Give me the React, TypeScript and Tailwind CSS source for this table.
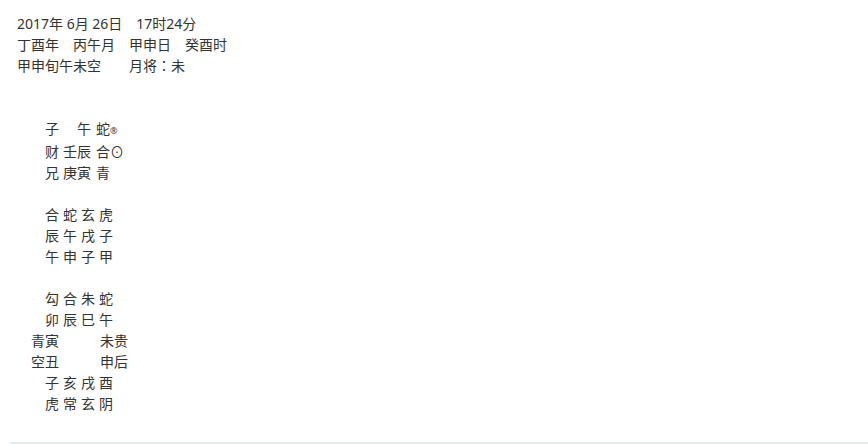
const font = { fontFamily: '"Noto Sans", "Noto Sans CJK SC", sans-serif' };

function Cell({ children, wide }: { children: React.ReactNode; wide?: boolean }) {
  return (
    <span className={`inline-block ${wide ? 'w-[28px]' : 'w-[14px]'} text-right whitespace-nowrap`}>
      {children}
    </span>
  );
}

function Row({ cells }: { cells: string[] }) {
  return (
    <div className="flex gap-[4px] pl-[28px]">
      {cells.map((c, i) => (
        <Cell key={i}>{c}</Cell>
      ))}
    </div>
  );
}

const Blank = () => <div className="h-[21px]" />;

export default function App() {
  return (
    <div className="bg-white min-h-[444px] w-full text-[#333] text-[14px] leading-[21px]" style={font}>
      <div className="pl-[17px] pt-[13px]">
        <div>2017年 6月 26日　17时24分</div>
        <div>丁酉年　丙午月　甲申日　癸酉时</div>
        <div>
          甲申旬午未空　　月将
          <span className="font-['Noto_Sans_CJK_TC',sans-serif]">：</span>未
        </div>
        <Blank />
        <Blank />

        {/* 三传 */}
        <div className="flex gap-[4px] pl-[28px]">
          <Cell>子</Cell>
          <Cell wide>午</Cell>
          <span className="ml-[1px] whitespace-nowrap">
            蛇<span className="text-[9px] align-middle">®</span>
          </span>
        </div>
        <div className="flex gap-[4px] pl-[28px]">
          <Cell>财</Cell>
          <Cell wide>壬辰</Cell>
          <span className="ml-[1px]">合⊙</span>
        </div>
        <div className="flex gap-[4px] pl-[28px]">
          <Cell>兄</Cell>
          <Cell wide>庚寅</Cell>
          <span className="ml-[1px]">青</span>
        </div>
        <Blank />

        {/* 四课 */}
        <Row cells={['合', '蛇', '玄', '虎']} />
        <Row cells={['辰', '午', '戌', '子']} />
        <Row cells={['午', '申', '子', '甲']} />
        <Blank />

        {/* 天地盘 */}
        <Row cells={['勾', '合', '朱', '蛇']} />
        <Row cells={['卯', '辰', '巳', '午']} />
        <div className="flex pl-[14px]">
          <span className="w-[69px]">青寅</span>
          <span>未贵</span>
        </div>
        <div className="flex pl-[14px]">
          <span className="w-[69px]">空丑</span>
          <span>申后</span>
        </div>
        <Row cells={['子', '亥', '戌', '酉']} />
        <Row cells={['虎', '常', '玄', '阴']} />
      </div>
      <div className="ml-[10px] mt-[28px] h-[2px] bg-[#e6eaed]" />
    </div>
  );
}
